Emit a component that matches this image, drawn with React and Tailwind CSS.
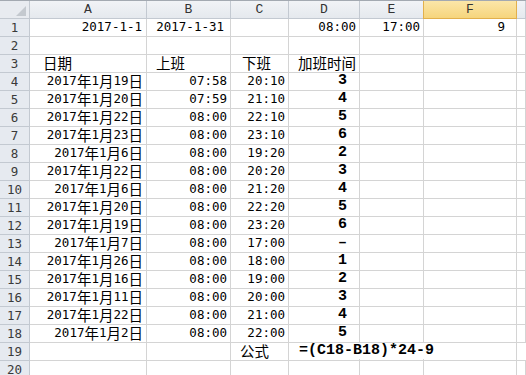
import React from 'react';

const cols = ['A', 'B', 'C', 'D', 'E', 'F', 'G'];

const dates = ['19', '20', '22', '23', '6', '22', '6', '20', '19', '7', '26', '16', '11', '22', '2'];
const starts = ['07:58', '07:59'];
const ends = ['20:10', '21:10', '22:10', '23:10', '19:20', '20:20', '21:20', '22:20', '23:20', '17:00', '18:00', '19:00', '20:00', '21:00', '22:00'];
const hours = ['3', '4', '5', '6', '2', '3', '4', '5', '6', '–', '1', '2', '3', '4', '5'];

// split ascii / CJK so each run gets a font of the right width
const Txt = ({ s }) =>
  s.split(/([^\x00-\xff]+)/).map((part, i) =>
    /[^\x00-\xff]/.test(part) ? (
      <span key={i} className="font-['Noto_Sans_CJK_SC',sans-serif] text-[14.5px] leading-[16px]">
        {part}
      </span>
    ) : (
      part
    )
  );

const Cell = ({ children, className = '' }) => (
  <div className={`border-r border-b border-[#d4d4d4] flex items-end pb-[1px] whitespace-nowrap ${className}`}>
    {children}
  </div>
);

const RowHead = ({ n }) => (
  <div className="bg-[#e6eaf0] border-r border-b border-[#c3c9d1] flex items-center justify-center text-[#3a3a3a] pt-[1px]">
    {n}
  </div>
);

const rows = [];
// row 1
rows.push([
  <Cell key="a" className="justify-end pr-[4px]"><Txt s="2017-1-1" /></Cell>,
  <Cell key="b" className="justify-end pr-[6px]"><Txt s="2017-1-31" /></Cell>,
  <Cell key="c" />,
  <Cell key="d" className="justify-end pr-[3px]">08:00</Cell>,
  <Cell key="e" className="justify-end pr-[3px]">17:00</Cell>,
  <Cell key="f" className="justify-end pr-[11px]">9</Cell>,
  <Cell key="g" />,
]);
// row 2
rows.push(cols.map((c) => <Cell key={c} />));
// row 3
rows.push([
  <Cell key="a" className="pl-[13px]"><Txt s="日期" /></Cell>,
  <Cell key="b" className="pl-[9px]"><Txt s="上班" /></Cell>,
  <Cell key="c" className="pl-[11px]"><Txt s="下班" /></Cell>,
  <Cell key="d" className="pl-[9px]"><Txt s="加班时间" /></Cell>,
  <Cell key="e" />,
  <Cell key="f" />,
  <Cell key="g" />,
]);
dates.forEach((d, i) => {
  rows.push([
    <Cell key="a" className="justify-end pr-[3px]"><Txt s={`2017年1月${d}日`} /></Cell>,
    <Cell key="b" className="justify-end pr-[3px]">{starts[i] || '08:00'}</Cell>,
    <Cell key="c" className="justify-end pr-[3px]">{ends[i]}</Cell>,
    <Cell key="d" className="justify-end pr-[12px] font-['Liberation_Mono',monospace] font-bold text-[15px]">{hours[i]}</Cell>,
    <Cell key="e" />,
    <Cell key="f" />,
    <Cell key="g" />,
  ]);
});
// row 19
rows.push([
  <Cell key="a" />,
  <Cell key="b" />,
  <Cell key="c" className="pl-[9px]"><Txt s="公式" /></Cell>,
  <div key="d" className="col-span-4 relative flex items-end pb-[1px]">
    <div className="grid grid-cols-[71px_64px_93px_1fr] absolute inset-0">
      <div className="border-r border-b border-[#d4d4d4]" />
      <div className="border-r border-b border-[#d4d4d4]" />
      <div className="border-r border-b border-[#d4d4d4]" />
      <div className="border-b border-[#d4d4d4]" />
    </div>
    <span className="relative pl-[10px] font-['Liberation_Mono',monospace] font-bold text-[15px] bg-white leading-[16px] mb-[1px]">
      =(C18-B18)*24-9
    </span>
  </div>,
]);
// row 20
rows.push(cols.map((c) => <Cell key={c} />));

const App = () => (
  <div className="w-[526px] h-[375px] overflow-hidden bg-white border-t border-[#a3a9b1] font-['DejaVu_Sans_Mono',monospace] text-[12.5px] leading-[16px] text-black">
    <div className="grid grid-cols-[30px_117px_84px_58px_71px_64px_93px_1fr] grid-rows-[18px] auto-rows-[18px]">
      {/* corner */}
      <div className="bg-[#e8ebf0] border-r border-b border-[#c3c9d1] relative">
        <svg className="absolute right-[3px] bottom-[2px]" width="10" height="10" viewBox="0 0 10 10">
          <polygon points="10,0 10,10 0,10" fill="#c4c9cf" />
        </svg>
      </div>
      {cols.map((c) =>
        c === 'F' ? (
          <div key={c} className="bg-gradient-to-b from-[#fbe6a8] to-[#f6d57c] border-x border-b border-[#e2b04c] -ml-px flex items-center justify-center font-['Liberation_Mono',monospace] text-[13px] text-[#333]">
            {c}
          </div>
        ) : (
          <div key={c} className="bg-gradient-to-b from-[#f1f3f6] to-[#e5e9ee] border-r border-b border-[#c3c9d1] flex items-center justify-center font-['Liberation_Mono',monospace] text-[13px] text-[#333]">
            {c === 'G' ? '' : c}
          </div>
        )
      )}
      {rows.map((cells, i) => (
        <React.Fragment key={i}>
          <RowHead n={i + 1} />
          {cells}
        </React.Fragment>
      ))}
    </div>
  </div>
);

export default App;
